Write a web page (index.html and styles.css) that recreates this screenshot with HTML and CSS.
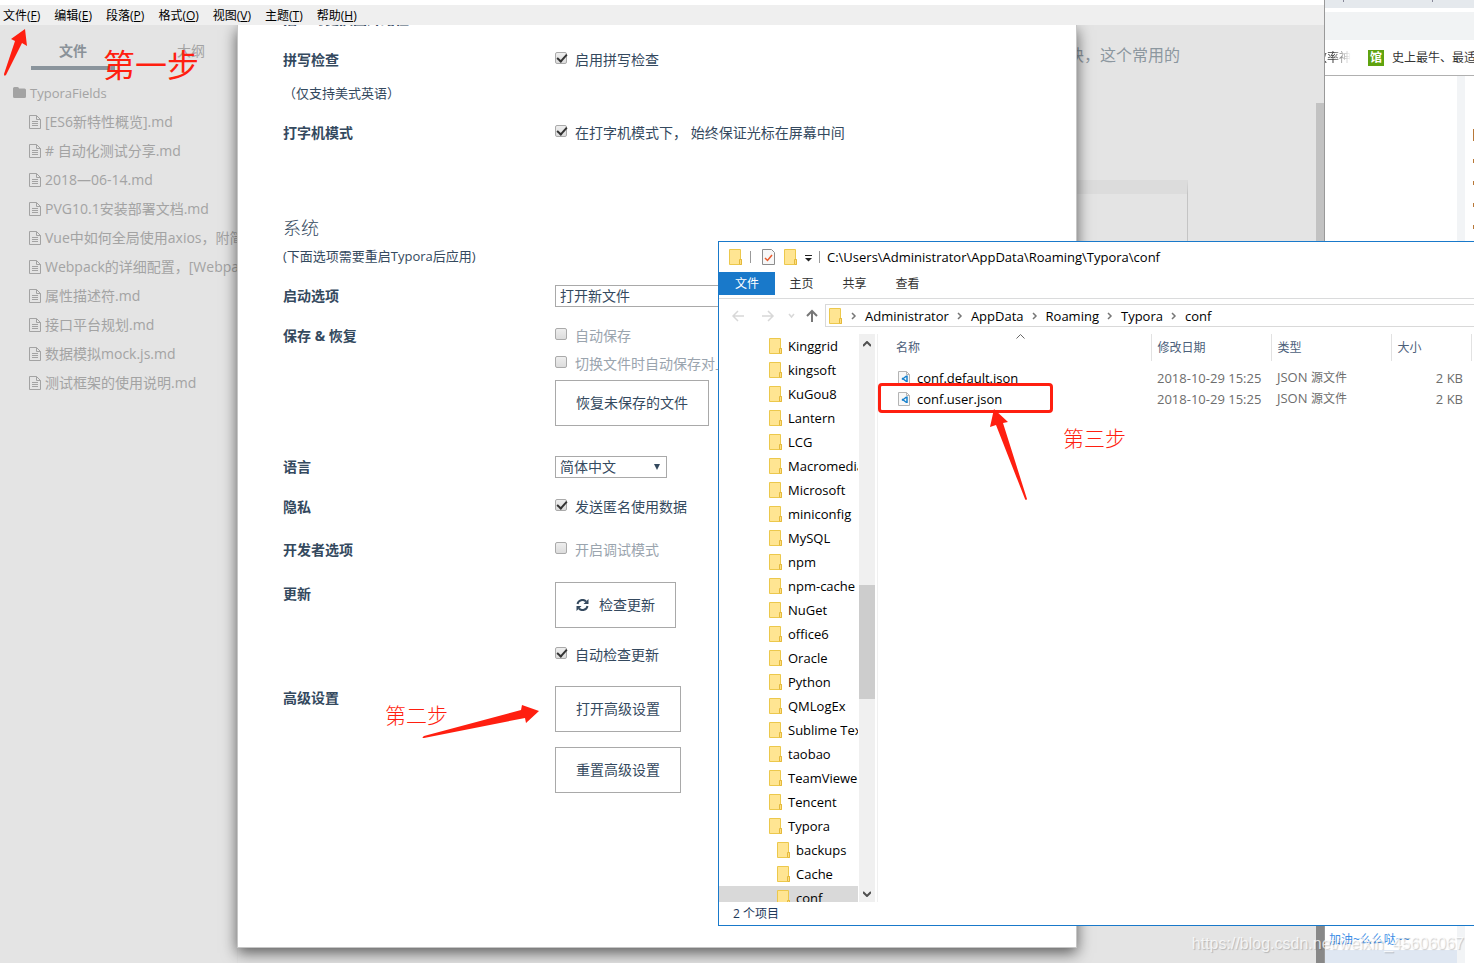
FILE: index.html
```
<!DOCTYPE html>
<html lang="zh-CN">
<head>
<meta charset="utf-8">
<title>Typora 设置</title>
<link rel="stylesheet" href="styles.css">
</head>
<body>
<svg class="defs" aria-hidden="true">
  <symbol id="doc" viewBox="0 0 12 14"><path d="M.5.5h7l4 4v9H.5zM7.5.5v4h4M3 6.500h6M3 8.500h6M3 10.500h6" fill="none" stroke="currentColor"/></symbol>
  <symbol id="folder" viewBox="0 0 14 16"><path d="M.5.5h11v10h1v5H.5z" fill="#ffe592" stroke="#ecc84c"/><path d="M10.500 15V10.500h2v5h-2" fill="#ffdf80" stroke="#e4b93c"/></symbol>
  <symbol id="json" viewBox="0 0 12 14"><path d="M.5.5h8l3 3v10H.5z" fill="#f8f8f8" stroke="#b4b4b4"/><path d="M8.500.5v3h3" fill="none" stroke="#b4b4b4"/><path d="M9 4.500v6.500M8.500 5 4 8.500M8.500 10.500 4 7" stroke="#1680cc" stroke-width="1.500" fill="none"/></symbol>
  <symbol id="crumb" viewBox="0 0 6 8"><path d="M1 1l3 3-3 3" fill="none" stroke="#777" stroke-width="1.500"/></symbol>
</svg>
<main class="desktop">

  <section class="browser" aria-label="浏览器">
    <div class="browser-tabs"><i></i><i></i></div>
    <div class="browser-address"></div>
    <div class="bookmarks"><span class="fade">效率神</span><b>馆</b><span>史上最牛、最适合</span></div>
    <div class="browser-page">
      <div class="page-main"><a href="#" class="page-link">加油~么么哒~~</a></div>
      <div class="page-gutter"></div>
      <div class="page-side"><i class="tall"></i><i></i><i></i><i></i><i></i></div>
    </div>
  </section>

  <section class="typora" aria-label="Typora">
    <nav class="menu">
      <button>文件(<u>F</u>)</button><button>编辑(<u>E</u>)</button><button>段落(<u>P</u>)</button><button>格式(<u>O</u>)</button><button>视图(<u>V</u>)</button><button>主题(<u>T</u>)</button><button>帮助(<u>H</u>)</button>
    </nav>
    <div class="workspace">
      <aside class="sidebar">
        <div class="side-tabs"><button class="active">文件</button><button>大纲</button></div>
        <div class="root"><svg width="13" height="11" viewBox="0 0 13 11"><path d="M0 1.500Q0 0 1.500 0h3Q6 0 6 1.500h5.500Q13 1.500 13 3v6.500Q13 11 11.500 11h-10Q0 11 0 9.500z" fill="currentColor"/></svg>TyporaFields</div>
        <ul class="files">
          <li><svg><use href="#doc"/></svg>[ES6新特性概览].md</li>
          <li><svg><use href="#doc"/></svg># 自动化测试分享.md</li>
          <li><svg><use href="#doc"/></svg>2018—06-14.md</li>
          <li><svg><use href="#doc"/></svg>PVG10.1安装部署文档.md</li>
          <li><svg><use href="#doc"/></svg>Vue中如何全局使用axios，附简</li>
          <li><svg><use href="#doc"/></svg>Webpack的详细配置，[Webpack</li>
          <li><svg><use href="#doc"/></svg>属性描述符.md</li>
          <li><svg><use href="#doc"/></svg>接口平台规划.md</li>
          <li><svg><use href="#doc"/></svg>数据模拟mock.js.md</li>
          <li><svg><use href="#doc"/></svg>测试框架的使用说明.md</li>
        </ul>
      </aside>
      <article class="editor">
        <p>块，这个常用的</p>
        <div class="code-box"></div>
        <div class="editor-scroll"></div>
      </article>

      <div class="dialog" role="dialog" aria-label="偏好设置">
        <form class="settings">
          <div class="row cut"><strong>插入时更换图片路径</strong></div>
          <div class="row spell"><strong>拼写检查</strong><label class="check"><input type="checkbox" checked>启用拼写检查</label></div>
          <div class="note">（仅支持美式英语）</div>
          <div class="row typewriter"><strong>打字机模式</strong><label class="check"><input type="checkbox" checked>在打字机模式下， 始终保证光标在屏幕中间</label></div>
          <h2>系统</h2>
          <div class="hint">(下面选项需要重启Typora后应用)</div>
          <div class="row launch"><label for="launch"><strong>启动选项</strong></label><select id="launch" class="wide"><option>打开新文件</option></select></div>
          <div class="row save"><strong>保存 &amp; 恢复</strong>
            <div class="stack">
              <label class="check off"><input type="checkbox">自动保存</label>
              <label class="check off"><input type="checkbox">切换文件时自动保存对上一个文件</label>
              <button type="button">恢复未保存的文件</button>
            </div>
          </div>
          <div class="row lang"><label for="lang"><strong>语言</strong></label><span class="picker"><select id="lang"><option>简体中文</option></select></span></div>
          <div class="row privacy"><strong>隐私</strong><label class="check"><input type="checkbox" checked>发送匿名使用数据</label></div>
          <div class="row dev"><strong>开发者选项</strong><label class="check off"><input type="checkbox">开启调试模式</label></div>
          <div class="row update"><strong>更新</strong>
            <div class="stack">
              <button type="button"><svg width="13" height="12" viewBox="0 0 13 12"><path d="M1.500 5A5 5 0 0 1 10 2.500M11.500 7A5 5 0 0 1 3 9.500" fill="none" stroke="currentColor" stroke-width="2"/><path d="M12.500 0v5H7.500zM.5 12V7h5z" fill="currentColor"/></svg>检查更新</button>
              <label class="check"><input type="checkbox" checked>自动检查更新</label>
            </div>
          </div>
          <div class="row advanced"><strong>高级设置</strong>
            <div class="stack">
              <button type="button">打开高级设置</button>
              <button type="button">重置高级设置</button>
            </div>
          </div>
        </form>
      </div>
    </div>
  </section>

  <section class="explorer" aria-label="文件资源管理器">
    <header class="title">
      <svg class="fold"><use href="#folder"/></svg><i class="bar"></i>
      <svg class="props" width="13" height="16" viewBox="0 0 13 16"><path d="M.5.5h9l3 3v12H.5z" fill="#f7f7f7" stroke="#8c8c8c"/><path d="M3 9l2.500 2.500L10 6" fill="none" stroke="#e8592b" stroke-width="1.500"/></svg>
      <svg class="fold"><use href="#folder"/></svg>
      <svg class="drop" width="7" height="7" viewBox="0 0 7 7"><path d="M0 .5h7" stroke="#222"/><path d="M0 3h7L3.500 6.500z" fill="#222"/></svg><i class="bar last"></i>
      <span>C:\Users\Administrator\AppData\Roaming\Typora\conf</span>
    </header>
    <nav class="ribbon"><button class="file">文件</button><button>主页</button><button>共享</button><button>查看</button></nav>
    <div class="address">
      <svg width="86" height="16" viewBox="0 0 86 16" fill="none" stroke="#d8d8d8" stroke-width="1.500"><path d="M12 8H1M6 3L1 8l5 5M30 8h11M36 3l5 5-5 5M57 6l2.500 3L62 6"/><path d="M80 14V3M75 8l5-5 5 5" stroke="#777" stroke-width="2"/></svg>
      <div class="path"><svg class="fold"><use href="#folder"/></svg><svg class="sep"><use href="#crumb"/></svg><a href="#">Administrator</a><svg class="sep"><use href="#crumb"/></svg><a href="#">AppData</a><svg class="sep"><use href="#crumb"/></svg><a href="#">Roaming</a><svg class="sep"><use href="#crumb"/></svg><a href="#">Typora</a><svg class="sep"><use href="#crumb"/></svg><a href="#">conf</a></div>
    </div>
    <div class="panes">
      <ul class="tree">
        <li><svg class="fold"><use href="#folder"/></svg>Kinggrid</li>
        <li><svg class="fold"><use href="#folder"/></svg>kingsoft</li>
        <li><svg class="fold"><use href="#folder"/></svg>KuGou8</li>
        <li><svg class="fold"><use href="#folder"/></svg>Lantern</li>
        <li><svg class="fold"><use href="#folder"/></svg>LCG</li>
        <li><svg class="fold"><use href="#folder"/></svg>Macromedia</li>
        <li><svg class="fold"><use href="#folder"/></svg>Microsoft</li>
        <li><svg class="fold"><use href="#folder"/></svg>miniconfig</li>
        <li><svg class="fold"><use href="#folder"/></svg>MySQL</li>
        <li><svg class="fold"><use href="#folder"/></svg>npm</li>
        <li><svg class="fold"><use href="#folder"/></svg>npm-cache</li>
        <li><svg class="fold"><use href="#folder"/></svg>NuGet</li>
        <li><svg class="fold"><use href="#folder"/></svg>office6</li>
        <li><svg class="fold"><use href="#folder"/></svg>Oracle</li>
        <li><svg class="fold"><use href="#folder"/></svg>Python</li>
        <li><svg class="fold"><use href="#folder"/></svg>QMLogEx</li>
        <li><svg class="fold"><use href="#folder"/></svg>Sublime Text</li>
        <li><svg class="fold"><use href="#folder"/></svg>taobao</li>
        <li><svg class="fold"><use href="#folder"/></svg>TeamViewer</li>
        <li><svg class="fold"><use href="#folder"/></svg>Tencent</li>
        <li><svg class="fold"><use href="#folder"/></svg>Typora</li>
        <li class="child"><svg class="fold"><use href="#folder"/></svg>backups</li>
        <li class="child"><svg class="fold"><use href="#folder"/></svg>Cache</li>
        <li class="child selected"><svg class="fold"><use href="#folder"/></svg>conf</li>
      </ul>
      <div class="scrollbar">
        <svg width="8" height="6" viewBox="0 0 8 6"><path d="M0 5l4-4 4 4" fill="none" stroke="#505050" stroke-width="2"/></svg>
        <div class="track"><div class="thumb"></div></div>
        <svg width="8" height="6" viewBox="0 0 8 6"><path d="M0 1l4 4 4-4" fill="none" stroke="#505050" stroke-width="2"/></svg>
      </div>
      <div class="list">
        <table>
          <colgroup><col class="c-name"><col class="c-date"><col class="c-type"><col class="c-size"></colgroup>
          <thead><tr><th>名称<svg class="sort" width="9" height="5" viewBox="0 0 9 5"><path d="M.5 4.500l4-4 4 4" fill="none" stroke="#666"/></svg></th><th>修改日期</th><th>类型</th><th>大小</th></tr></thead>
          <tbody>
            <tr><td><span class="name"><svg><use href="#json"/></svg>conf.default.json</span></td><td>2018-10-29 15:25</td><td>JSON <small>源文件</small></td><td>2 KB</td></tr>
            <tr><td><span class="name"><svg><use href="#json"/></svg>conf.user.json</span></td><td>2018-10-29 15:25</td><td>JSON <small>源文件</small></td><td>2 KB</td></tr>
          </tbody>
        </table>
      </div>
    </div>
    <footer class="status">2 个项目</footer>
  </section>

  <div class="mark box"></div>
  <span class="mark step one">第一步</span>
  <span class="mark step two">第二步</span>
  <span class="mark step three">第三步</span>
  <svg class="mark arrow-one" width="24" height="50" viewBox="0 0 24 50"><path d="M21 0L23 17 18 14 2 46Q0 48 0 45L11 12 7 10z"/></svg>
  <svg class="mark arrow-two" width="118" height="34" viewBox="0 0 118 34"><path d="M117 6L104 18 103 13 2 33Q-1 33 2 31L99 5 100 0z"/></svg>
  <svg class="mark arrow-three" width="38" height="92" viewBox="0 0 38 92"><path d="M4 0L18 13 13 14 37 90Q36 92 35 90L6 16 0 18z"/></svg>
  <span class="watermark">https://blog.csdn.net/weixin_45606067</span>
</main>
</body>
</html>
```
FILE: styles.css
```
* { box-sizing: border-box; }
body { margin: 0; font: 14px/22px "Open Sans", "Noto Sans CJK SC", sans-serif; color: #34495e; }
button { font: inherit; color: inherit; border: 0; background: none; padding: 0; }
ul { list-style: none; margin: 0; padding: 0; }
a { color: inherit; text-decoration: none; }
.defs { position: absolute; width: 0; height: 0; }
.desktop { position: relative; height: 100vh; overflow: hidden; background: #fff; }

/* Browser window at the back */
.browser { position: absolute; top: 0; right: 0; bottom: 0; width: 150px; display: flex; flex-direction: column; font-size: 12px; color: #333; }
.browser-tabs { height: 8px; background: #e5e9ed; display: flex; gap: 88px; padding-left: 19px; }
.browser-tabs i { width: 1px; height: 2px; background: #889; }
.browser-address { height: 28px; margin-top: 4px; background: #f1f3f4; }
.bookmarks { height: 36px; border-bottom: 1px solid #b0b0b0; display: flex; align-items: center; white-space: nowrap; overflow: hidden; }
.bookmarks .fade { flex: none; width: 36px; margin-left: -9px; background: linear-gradient(90deg, #333 50%, #fff); background-clip: text; color: transparent; }
.bookmarks b { flex: none; width: 16px; height: 16px; line-height: 16px; margin: 0 8px 0 17px; text-align: center; background: #5fa30f; color: #fff; }
.browser-page { flex: 1; display: flex; }
.page-main { flex: 1; display: flex; flex-direction: column; justify-content: flex-end; }
.page-link { height: 38px; padding: 4px 0 0 5px; line-height: 22px; border-bottom: 13px solid #dfe7f2; color: #3d8ee6; }
.page-gutter { width: 8px; background: #f2f4f6; }
.page-side { width: 9px; padding: 53px 0 0 8px; display: flex; flex-direction: column; gap: 18px; }
.page-side i { height: 4px; background: #b87838; }
.page-side .tall { height: 12px; }

/* Typora window */
.typora { position: absolute; top: 0; left: 0; right: 149px; bottom: 0; display: flex; flex-direction: column; border-right: 1px solid #999; background: #e4e4e4; }
.menu { height: 25px; border-top: 5px solid #fff; background: #efefef; display: flex; gap: 14px; padding-left: 3px; font-size: 12px; color: #000; }
.menu button { line-height: 22px; height: 22px; }
.workspace { position: relative; flex: 1; display: flex; min-height: 0; }
.sidebar { width: 237px; overflow: hidden; white-space: nowrap; color: #a3a3a3; }
.side-tabs { display: flex; gap: 34px; padding: 12px 0 0 31px; margin-bottom: 8px; }
.side-tabs button { width: 84px; height: 33px; line-height: 28px; padding-bottom: 2px; border-bottom: 4px solid transparent; }
.side-tabs .active { font-weight: bold; color: #8a9299; border-color: #8a949c; }
.root { height: 29px; display: flex; align-items: center; gap: 4px; padding-left: 13px; font-size: 13px; }
.files { padding-left: 29px; }
.files li { height: 29px; display: flex; align-items: center; gap: 4px; }
.files svg { width: 12px; height: 14px; flex: none; }
.editor { flex: 1; position: relative; display: flex; flex-direction: column; border-left: 1px solid #e0e0e0; font-size: 16px; color: #8c979f; }
.editor p { margin: 19px 144px 0 0; text-align: right; }
.code-box { flex: 1; margin: 114px 136px 0 0; border-top: 14px solid #dcdcdc; border-right: 1px solid #c4c4c4; max-height: 180px; }
.editor-scroll { position: absolute; top: 78px; right: 0; bottom: 0; width: 8px; background: linear-gradient(#c2c2c2 700px, #888 700px); }

/* Preferences dialog */
.dialog { position: absolute; left: 237px; right: 247px; top: 0; bottom: 15px; border: 1px solid #c6c6c6; border-top: 0; background: #fff; clip-path: inset(0 -20px -20px -20px); box-shadow: 0 5px 14px rgba(0,0,0,.6); }
.settings { margin-top: -17px; padding-left: 45px; white-space: nowrap; }
.row { display: grid; grid-template-columns: 272px 1fr; align-items: start; }
.cut { margin-bottom: 19px; }
.note { margin-top: 11px; font-size: 13px; }
.typewriter { margin-top: 18px; }
h2 { margin: 72px 0 5px; font-size: 18px; line-height: 24px; font-weight: 300; }
.hint { font-size: 13px; }
.launch, .save, .privacy { margin-top: 18px; }
.lang { margin-top: 30px; }
.dev { margin-top: 21px; }
.update, .advanced { margin-top: 21px; }
.check { display: flex; align-items: center; gap: 8px; }
.check input { appearance: none; width: 12px; height: 12px; margin: 0 0 4px; flex: none; border: 1px solid #aaa; border-radius: 2px; background: linear-gradient(#eee, #dcdcdc); display: grid; }
.check input:checked::after { content: ""; width: 8px; height: 4px; margin: 1px; border: solid #333; border-width: 0 0 2px 2px; transform: rotate(-48deg); }
.off { color: #9aa4ae; }
.stack { display: flex; flex-direction: column; align-items: flex-start; }
.stack button { height: 46px; padding: 0 20px; border: 1px solid #a9a9a9; background: #fff; display: flex; align-items: center; gap: 10px; }
.save .check + .check { margin-top: 6px; }
.save button { margin-top: 5px; }
.update strong, .advanced strong { margin-top: 1px; }
.update .check { margin-top: 16px; }
.advanced { margin-top: 20px; }
.advanced button + button { margin-top: 15px; }
select { appearance: none; width: 112px; height: 22px; padding: 0 4px; border: 1px solid #a9a9a9; border-radius: 0; background: #fff; font: inherit; line-height: 20px; color: inherit; }
.wide { width: 260px; }
.picker { display: flex; align-items: center; width: 112px; }
.picker select { flex: none; }
.picker::after { content: ""; margin-left: -13px; border: 3px solid transparent; border-top: 6px solid #34495e; border-bottom: 0; }

/* Explorer window */
.explorer { position: absolute; top: 241px; left: 718px; right: 0; bottom: 37px; display: flex; flex-direction: column; border: 1px solid #1979ca; border-right: 0; background: #fff; font-size: 12px; color: #000; white-space: nowrap; overflow: hidden; }
.fold { width: 14px; height: 16px; flex: none; }
.title { height: 30px; flex: none; display: flex; align-items: center; padding-left: 10px; font-size: 13px; }
.title .bar { width: 1px; height: 12px; margin: 0 11px 0 7px; background: #999; }
.title .props { margin-right: 9px; }
.title .drop { margin: 3px 0 0 7px; }
.title .last { margin-right: 7px; }
.ribbon { height: 27px; flex: none; display: flex; border-bottom: 1px solid #dadbdc; color: #333; }
.ribbon button { height: 23px; width: 53px; line-height: 24px; }
.ribbon .file { width: 56px; background: #1979ca; color: #fff; }
.address { margin: 5px 0 7px; height: 23px; flex: none; display: flex; align-items: center; gap: 7px; padding-left: 13px; }
.address > svg { flex: none; }
.path { flex: 1; height: 23px; border: 1px solid #d9d9d9; border-right: 0; display: flex; align-items: center; gap: 8px; padding-left: 3px; font-size: 13px; line-height: 20px; }
.path .sep { width: 6px; height: 8px; flex: none; }
.panes { flex: 1; min-height: 0; display: flex; }
.tree { width: 139px; overflow: hidden; font-size: 13px; }
.tree li { height: 24px; display: flex; align-items: center; gap: 5px; padding-left: 50px; }
.tree .child { padding-left: 58px; }
.tree .selected { background: #d9d9d9; }
.scrollbar { width: 17px; padding: 7px 0 5px; background: #f0f0f0; border-left: 1px solid #fff; display: flex; flex-direction: column; align-items: center; }
.track { flex: 1; align-self: stretch; display: flex; flex-direction: column; padding-top: 238px; }
.thumb { height: 114px; background: #cdcdcd; }
.list { flex: 1; margin-left: 2px; border-left: 1px solid #f0f0f0; overflow: hidden; }
table { border-collapse: collapse; table-layout: fixed; width: 593px; }
.c-name { width: 273px; }
.c-date, .c-type { width: 120px; }
.c-size { width: 80px; }
th { position: relative; height: 27px; padding: 0 0 0 6px; border-right: 1px solid #e2e2e2; text-align: left; font-weight: normal; color: #4c607a; }
th:first-child, td:first-child { padding-left: 18px; }
.sort { position: absolute; top: 0; left: 138px; }
tbody::before { content: ""; display: block; height: 6px; }
td { height: 21px; padding: 0 0 0 6px; line-height: 20px; font-size: 13px; color: #6d6d6d; }
td:first-child { color: #000; }
td:last-child { text-align: right; padding-right: 8px; }
small { font-size: 12px; }
.name { display: flex; align-items: center; gap: 7px; padding-left: 2px; }
.name svg { width: 12px; height: 14px; }
.status { height: 23px; line-height: 24px; flex: none; padding-left: 14px; color: #1e395b; }

/* Step annotations drawn over the windows */
.mark { position: absolute; color: #ff1f10; fill: #ff1f10; }
.box { left: 878px; top: 383px; width: 175px; height: 30px; border: 3px solid; border-radius: 4px; }
.step { font-size: 21px; line-height: 28px; font-weight: 300; }
.one { left: 103px; top: 46px; font-size: 32px; line-height: 38px; font-weight: 400; }
.two { left: 385px; top: 701px; }
.three { left: 1063px; top: 424px; }
.arrow-one { left: 4px; top: 29px; }
.arrow-two { left: 422px; top: 705px; }
.arrow-three { left: 990px; top: 409px; }
.watermark { position: absolute; right: 10px; bottom: 8px; font: 16px/22px "Liberation Sans", sans-serif; color: rgba(255,255,255,.75); text-shadow: 1px 1px 1px rgba(0,0,0,.2); }
```
